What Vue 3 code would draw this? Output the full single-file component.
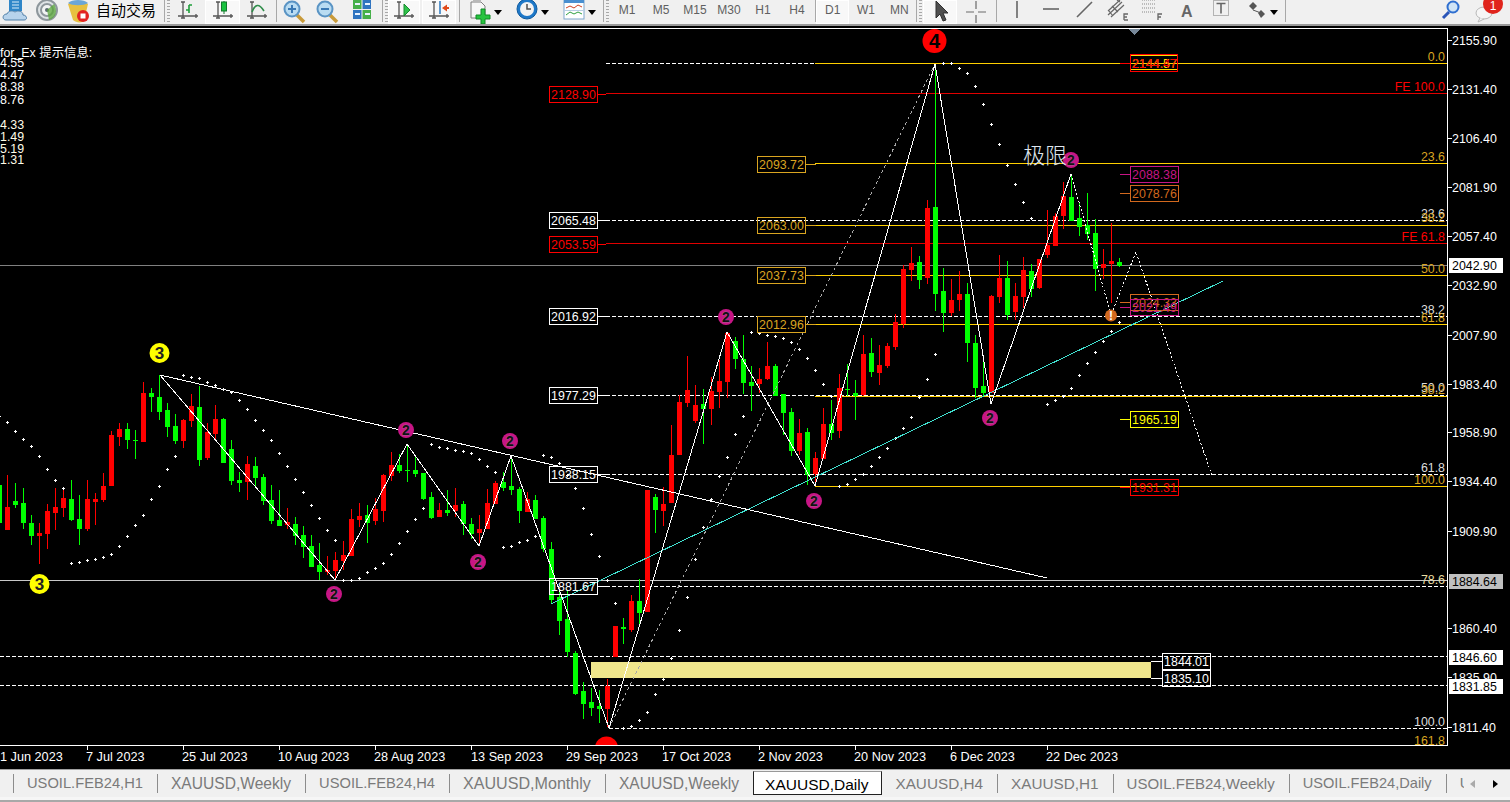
<script setup>
const c = [
[-0.5,470,485,523,540,'g'],[7.5,475,507,530,530,'r'],[15.5,483,501,505,508,'g'],[23.5,488,503,523,529,'g'],[31.5,515,523,536,545,'g'],[39.5,523,533,536,564,'r'],[47.5,504,511,534,549,'r'],[55.5,488,507,513,530,'r'],[63.5,490,498,508,517,'r'],[71.5,480,499,520,521,'g'],[79.5,495,519,529,545,'g'],[87.5,480,499,529,531,'r'],[95.5,493,499,502,525,'r'],[103.5,473,486,500,502,'r'],[111.5,431,435,486,486,'r'],[119.5,423,429,437,446,'r'],[127.5,423,429,440,449,'g'],[135.5,430,440,441,459,'g'],[143.5,382,393,442,442,'r'],[151.5,388,393,397,412,'g'],[159.5,375,397,412,420,'g'],[167.5,403,410,427,437,'g'],[175.5,414,426,441,444,'g'],[183.5,419,420,441,448,'r'],[191.5,394,406,421,427,'r'],[199.5,386,407,460,466,'g'],[207.5,423,432,458,460,'r'],[215.5,405,419,434,440,'r'],[223.5,418,419,463,463,'g'],[231.5,440,449,481,485,'g'],[239.5,472,480,483,492,'g'],[247.5,456,464,482,500,'r'],[255.5,457,466,478,487,'g'],[263.5,474,477,501,505,'g'],[271.5,485,500,521,524,'g'],[279.5,490,520,526,526,'g'],[287.5,508,522,525,529,'r'],[295.5,517,524,536,545,'g'],[303.5,526,535,547,558,'g'],[311.5,535,546,567,567,'g'],[319.5,543,565,572,580,'g'],[327.5,556,570,572,575,'r'],
[335.5,552,560,571,580,'r'],[343.5,541,555,561,570,'r'],[351.5,509,519,556,556,'r'],[359.5,503,516,520,527,'r'],[367.5,505,515,523,543,'g'],[375.5,498,509,521,525,'r'],[383.5,474,475,511,522,'r'],[391.5,452,465,476,481,'r'],[399.5,454,465,471,473,'g'],[407.5,445,470,471,482,'g'],[415.5,457,470,474,477,'g'],[423.5,473,473,499,500,'g'],[431.5,492,497,518,519,'g'],[439.5,503,510,517,517,'r'],[447.5,490,510,513,516,'g'],[455.5,488,505,511,517,'r'],[463.5,501,504,524,535,'g'],[471.5,518,524,534,539,'g'],[479.5,515,529,533,545,'r'],[487.5,489,503,529,529,'r'],[495.5,481,483,504,504,'r'],[503.5,472,482,488,491,'g'],[511.5,456,486,490,495,'g'],[519.5,487,489,511,523,'g'],[527.5,492,499,512,512,'r'],[535.5,495,500,519,519,'g'],[543.5,516,518,549,552,'g'],[551.5,542,549,600,604,'g'],[559.5,590,597,621,635,'g'],[567.5,590,619,652,657,'g'],[575.5,651,653,694,695,'g'],[583.5,682,691,704,719,'g'],[591.5,688,702,708,716,'g'],[599.5,690,706,709,723,'g'],[607.5,679,686,709,727,'r'],[615.5,626,626,657,657,'r'],[623.5,618,627,629,644,'g'],[631.5,595,601,630,632,'r'],[639.5,579,601,613,625,'g'],
[647.5,490,490,612,612,'r'],[655.5,494,497,510,533,'g'],[663.5,487,504,511,526,'r'],[671.5,425,455,503,503,'r'],[679.5,395,402,455,455,'r'],[687.5,356,390,403,407,'r'],[695.5,385,405,421,423,'r'],[703.5,389,404,409,444,'g'],[711.5,377,391,409,425,'r'],[719.5,360,381,392,408,'r'],[727.5,332,333,382,398,'r'],[735.5,337,341,359,369,'g'],[743.5,335,359,383,394,'g'],[751.5,366,382,386,411,'g'],[759.5,368,379,384,393,'r'],[767.5,342,366,379,380,'r'],[775.5,364,366,396,396,'g'],[783.5,394,394,413,435,'g'],[791.5,408,412,451,456,'g'],[799.5,419,433,451,455,'r'],[807.5,428,432,475,485,'g'],[815.5,452,458,474,485,'r'],[823.5,408,424,459,459,'r'],[831.5,400,424,433,440,'g'],[839.5,374,388,431,438,'r'],[847.5,364,389,390,396,'g'],[855.5,380,393,396,420,'g'],[863.5,335,354,395,396,'r'],[871.5,338,353,372,377,'g'],[879.5,345,365,373,385,'r'],[887.5,343,346,366,368,'r'],
[895.5,314,322,347,350,'r'],[903.5,265,269,324,328,'r'],[911.5,247,263,270,281,'r'],[919.5,256,262,280,289,'g'],[927.5,200,208,278,284,'r'],[935.5,64,207,294,311,'g'],[943.5,268,291,313,332,'g'],[951.5,279,300,313,316,'r'],[959.5,271,294,300,311,'r'],[967.5,283,294,343,362,'g'],[975.5,335,343,388,398,'g'],[983.5,359,386,393,397,'g'],[991.5,295,296,393,393,'r'],[999.5,255,278,297,303,'r'],[1007.5,261,278,315,320,'g'],[1015.5,283,296,312,320,'r'],[1023.5,257,270,297,308,'r'],[1031.5,264,271,289,297,'g'],[1039.5,259,259,288,289,'r'],[1047.5,210,245,255,258,'r'],[1055.5,213,216,246,246,'r'],[1063.5,182,196,216,229,'r'],[1071.5,175,197,221,221,'g'],[1079.5,202,218,227,236,'g'],[1087.5,193,225,234,240,'g'],[1095.5,219,233,269,291,'g'],[1103.5,249,264,268,279,'r'],[1111.5,223,261,264,303,'r'],[1119.5,258,262,266,267,'g']
]
const candles = c.map(([x, hi, top, bot, lo, k]) => ({ x, hi, top, bot: Math.max(bot, top + 1), lo, col: k === 'r' ? '#ff0000' : '#00ff00' }))

const segs = [
  [-0.5, [416,422,431,439,446,456,469,480,488]],
  [71.5, [563,562,560,559,557,554,546,536,525,515,499,486,469,456]],
  [183.5, [375,377,378,382,385,389,392,400,409,420,430,440,453,466,479,492,505,518,530,540]],
  [343.5, [580,580,578,572,568,563,554,543,531,519,508]],
  [431.5, [444,447,448,450,451,453,459,466,472]],
  [503.5, [547,546,542,540,536]],
  [543.5, [455,457,463,475,488,508,534,556,580,603]],
  [623.5, [728,726,720,712,694,679,658,630,597,559,527,499,476,457,434,416]],
  [751.5, [332,333,335,336,338,342,349,358,370,384,396]],
  [839.5, [486,484,479,474,466,457,448,438,428,417,397,379,354]],
  [943.5, [63,63,68,73,86,104,124,144,165,184,202,218]],
  [1047.5, [404,400,396,388,375,363,352,341,331,322]]
]
let dotPath = ''
for (const [s, ys] of segs) ys.forEach((y, i) => {
  const x = s + i * 8
  dotPath += `M${x - 1.5} ${y + 0.5}h3M${x} ${y - 1}v3`
})

const WHITE = '#ffffff', RED = '#ff0000', GOLD = '#ffd000'
const hlines = [
  { y: 63.5, x1: 606, col: WHITE, dash: true }, { y: 220.5, x1: 606, col: WHITE, dash: true },
  { y: 316.5, x1: 606, col: WHITE, dash: true }, { y: 395.5, x1: 606, col: WHITE, dash: true },
  { y: 474.5, x1: 606, col: WHITE, dash: true }, { y: 586.5, x1: 606, col: WHITE, dash: true },
  { y: 656.5, x1: 0, col: WHITE, dash: true }, { y: 685.5, x1: 0, col: WHITE, dash: true },
  { y: 728.5, x1: 609, col: WHITE, dash: true },
  { y: 93.5, x1: 606, col: '#e00000' }, { y: 243.5, x1: 606, col: '#e00000' },
  { y: 265.5, x1: 0, col: '#808080' }, { y: 580.5, x1: 0, col: '#c8c8c8' },
  { y: 63.5, x1: 815, col: GOLD }, { y: 163.5, x1: 815, col: GOLD }, { y: 225.5, x1: 815, col: GOLD },
  { y: 275.5, x1: 815, col: GOLD }, { y: 324.5, x1: 815, col: GOLD }, { y: 396.5, x1: 815, col: GOLD },
  { y: 486.5, x1: 815, col: GOLD }
]

const PUR = '#c71585', ORG = '#d2691e', GLD = '#daa520'
const boxes = [
  { x: 549, cy: 94, t: '2128.90', col: RED, stub: 8 }, { x: 549, cy: 220, t: '2065.48', col: WHITE, stub: 8 },
  { x: 549, cy: 244, t: '2053.59', col: RED, stub: 8 }, { x: 549, cy: 316, t: '2016.92', col: WHITE, stub: 8 },
  { x: 549, cy: 395, t: '1977.29', col: WHITE, stub: 8 }, { x: 549, cy: 474, t: '1938.15', col: WHITE, stub: 8 },
  { x: 549, cy: 586, t: '1881.67', col: WHITE, stub: 8 },
  { x: 757, cy: 164, t: '2093.72', col: GLD, stub: 10 }, { x: 757, cy: 225, t: '2063.00', col: GLD, stub: 10 },
  { x: 757, cy: 275, t: '2037.73', col: GLD, stub: 10 }, { x: 757, cy: 324, t: '2012.96', col: GLD, stub: 10 },
  { x: 1130, cy: 174, t: '2088.38', col: PUR, stubL: 10 }, { x: 1130, cy: 193, t: '2078.76', col: ORG, stubL: 10 },
  { x: 1130, cy: 302, t: '2024.33', col: ORG, stubL: 10 }, { x: 1130, cy: 307, t: '2021.49', col: PUR, stubL: 10 },
  { x: 1130, cy: 419, t: '1965.19', col: '#ffff00', stubL: 10 }, { x: 1130, cy: 487, t: '1931.31', col: RED, stubL: 10 },
  { x: 1162, cy: 661, t: '1844.01', col: WHITE, stubL: 11 }, { x: 1162, cy: 678, t: '1835.10', col: WHITE, stubL: 11 }
]

const fib = [
  { y: 61, t: '0.0', col: GLD }, { y: 91, t: 'FE 100.0', col: RED }, { y: 161, t: '23.6', col: GLD },
  { y: 218, t: '23.6', col: '#dddddd' }, { y: 222, t: '38.2', col: GLD }, { y: 241, t: 'FE 61.8', col: RED },
  { y: 273, t: '50.0', col: GLD }, { y: 314, t: '38.2', col: '#dddddd' }, { y: 322, t: '61.8', col: GLD },
  { y: 392, t: '50.0', col: '#dddddd' }, { y: 394, t: '38.2', col: GLD }, { y: 472, t: '61.8', col: '#dddddd' },
  { y: 484, t: '100.0', col: GLD }, { y: 584, t: '78.6', col: '#e8dca0' }, { y: 726, t: '100.0', col: '#dddddd' },
  { y: 745, t: '161.8', col: GLD }
]

const prices = [
  [40, '2155.90'], [89, '2131.40'], [138, '2106.40'], [187, '2081.90'], [236, '2057.40'], [285, '2032.90'],
  [335, '2007.90'], [384, '1983.40'], [432, '1958.90'], [481, '1934.40'], [531, '1909.90'], [628, '1860.40'],
  [677, '1835.90'], [727, '1811.40']
]
const tagged = [
  { y: 265, t: '2042.90', bg: '#ffffff' }, { y: 581, t: '1884.64', bg: '#c0c0c0' },
  { y: 657, t: '1846.60', bg: '#ffffff' }, { y: 686, t: '1831.85', bg: '#ffffff' }
]
const dates = [
  [0, null, '1 Jun 2023'], [86, 87, '7 Jul 2023'], [182, 183, '25 Jul 2023'], [278, 279, '10 Aug 2023'],
  [374, 375, '28 Aug 2023'], [471, 471, '13 Sep 2023'], [566, 567, '29 Sep 2023'], [662, 663, '17 Oct 2023'],
  [758, 759, '2 Nov 2023'], [854, 855, '20 Nov 2023'], [950, 951, '6 Dec 2023'], [1046, 1047, '22 Dec 2023']
]
const leftA = [[67, '4.55'], [79, '4.47'], [91, '8.38'], [104, '8.76']]
const leftB = [[129, '4.33'], [141, '1.49'], [153, '5.19'], [164, '1.31']]
const marks = [
  { x: 726, y: 317 }, { x: 814, y: 501 }, { x: 990, y: 418 }, { x: 1071, y: 160 },
  { x: 406, y: 430 }, { x: 510, y: 441 }, { x: 478, y: 562 }, { x: 334, y: 594 }
]
const tfA = ['M1', 'M5', 'M15', 'M30', 'H1', 'H4']
const tfB = ['D1', 'W1', 'MN']
const tabs = [
  { t: 'USOIL.FEB24,H1', fs: 14.7 }, { t: 'XAUUSD,Weekly', fs: 15.6 }, { t: 'USOIL.FEB24,H4', fs: 14.7 },
  { t: 'XAUUSD,Monthly', fs: 16.1 }, { t: 'XAUUSD,Weekly', fs: 15.6 }, { t: 'XAUUSD,Daily', fs: 15.5 },
  { t: 'XAUUSD,H4', fs: 15.3 }, { t: 'XAUUSD,H1', fs: 15.3 }, { t: 'USOIL.FEB24,Weekly', fs: 15 },
  { t: 'USOIL.FEB24,Daily', fs: 14.6 }, { t: 'USOIL.FEB24,H4', fs: 14.7 }
]
</script>

<template>
  <div class="app">
    <div class="toolbar">
      <span class="b w31"><svg width="30" height="24" viewBox="0 0 30 24"><rect x="8" y="-2" width="13" height="13" fill="#2f86c8"/><path d="M11 2h7M11 5h7M11 8h7" stroke="#d8ecfa"/><path d="M5 20c-4 0-4-6 1-6 1-3 5-4 8-2 3-2 8-1 8 3 4 0 5 5 1 5z" fill="#b7d3ec" stroke="#4f7fa8"/></svg></span>
      <span class="b w31"><svg width="24" height="24" viewBox="0 0 24 24"><circle cx="12" cy="10" r="10" fill="#dfe4e6" stroke="#8e979c" stroke-width="2"/><circle cx="12" cy="10" r="6" fill="#f2f4f4" stroke="#8e979c" stroke-width="2"/><circle cx="12" cy="10" r="2" fill="#5b6b72"/><path d="M19 4c4 6 2 14-5 16l-2-10z" fill="#58a63a" opacity=".75"/></svg></span>
      <span class="b w32"><svg width="26" height="24" viewBox="0 0 26 24"><path d="M3 4c4-3 16-3 20 0l-4 17c-2 2-8 2-11-1z" fill="#e7c040"/><path d="M3 3c4-4 16-4 20 0-4 3-16 3-20 0z" fill="#6ba6d6"/><circle cx="18" cy="16" r="6" fill="#e22222"/><rect x="15.5" y="13.5" width="5" height="5" fill="#fff"/></svg></span>
      <span class="auto">自动交易</span>
      <i class="sep"></i><i class="grip"></i>

      <span class="b w34"><svg width="24" height="24" viewBox="0 0 24 24"><path class="ax" d="M7 2v16M2 16h20M5 2h4M20 14v4M5 18h4"/><path d="M13 13V5M13 10h-3M13 5h3" stroke="#1e9e3a" stroke-width="1.6" fill="none"/></svg></span>
      <span class="b w35 on"><svg width="24" height="24" viewBox="0 0 24 24"><path class="ax" d="M7 2v16M2 16h20M5 2h4M20 14v4M5 18h4"/><path d="M13 0v14" stroke="#137a2c"/><rect x="10.500" y="2" width="5" height="9" fill="#19c23f" stroke="#137a2c"/></svg></span>
      <span class="b w33"><svg width="24" height="24" viewBox="0 0 24 24"><path class="ax" d="M7 2v16M2 16h20M5 2h4M20 14v4M5 18h4"/><path d="M7 12c3-8 7-9 12-1" stroke="#2f8d4a" stroke-width="1.600" fill="none"/></svg></span>
      <i class="sep"></i>
      <span class="b w31"><svg width="26" height="24" viewBox="0 0 26 24"><path d="M15 15l7 7" stroke="#c89a3a" stroke-width="3.500"/><circle cx="10" cy="9" r="7.500" fill="#b9dcf2" stroke="#5a94c4" stroke-width="2"/><path d="M6 9h8M10 5v8" stroke="#3a79b4" stroke-width="2"/></svg></span>
      <span class="b w35"><svg width="26" height="24" viewBox="0 0 26 24"><path d="M15 15l7 7" stroke="#c89a3a" stroke-width="3.500"/><circle cx="10" cy="9" r="7.500" fill="#b9dcf2" stroke="#5a94c4" stroke-width="2"/><path d="M6 9h8" stroke="#3a79b4" stroke-width="2"/></svg></span>
      <span class="b w34"><svg width="24" height="24" viewBox="0 0 24 24"><rect x="3" y="0" width="8.500" height="9" fill="#46b04a"/><rect x="12.500" y="0" width="8.500" height="9" fill="#2f74c0"/><rect x="3" y="10" width="8.500" height="9" fill="#2f74c0"/><rect x="12.500" y="10" width="8.500" height="9" fill="#46b04a"/><path d="M5 4h5M15 4h5M5 14h5M15 14h5" stroke="#e8f2ff" stroke-width="2"/></svg></span>
      <i class="sep"></i><i class="grip narrow"></i>

      <span class="b w32 on"><svg width="24" height="24" viewBox="0 0 24 24"><path class="ax" d="M7 2v16M2 16h20M5 2h4M20 14v4M5 18h4"/><path d="M12 4l6 6-6 6z" fill="#2fc24a" stroke="#188a30"/></svg></span>
      <span class="b w34 gapl on"><svg width="24" height="24" viewBox="0 0 24 24"><path class="ax" d="M7 2v16M2 16h20M5 2h4M20 14v4M5 18h4"/><path d="M13 1v13" stroke="#2a78c0" stroke-width="1.500"/><path d="M15 8l5-3.500V7h2v2h-2v2.500z" fill="#e04a1a"/></svg></span>
      <i class="sep"></i>
      <span class="b w46 ld p6 g0"><svg width="26" height="24" viewBox="0 0 26 24"><path d="M3 2h10l4 4v12H3z" fill="#f7f7f7" stroke="#808080"/><path d="M5 0h8" stroke="#808080"/><path d="M13 9h4v6h5v4h-5v5h-4v-5H8v-4h5z" fill="#27c43f" stroke="#118a26"/></svg><em class="drop"></em></span>
      <span class="b w44 ld p7"><svg width="24" height="24" viewBox="0 0 24 24"><circle cx="12" cy="9" r="10" fill="#1e78c8" stroke="#0e5a9e"/><circle cx="12" cy="9" r="7" fill="#f3f3f3"/><path d="M12 4v5h4" stroke="#505050" fill="none" stroke-width="1.500"/></svg><em class="drop"></em></span>
      <span class="b w48 ld p10"><svg width="24" height="24" viewBox="0 0 24 24"><rect x="2" y="-1" width="20" height="20" fill="#fff" stroke="#7ea6cc"/><rect x="2" y="-1" width="20" height="4" fill="#4a8fd0"/><path d="M4 8l4-2 4 2 4-3 4 2" stroke="#d04020" fill="none"/><path d="M4 15l4-3 4 2 4-2 4 2" stroke="#30a040" fill="none"/><path d="M2 10.500h20" stroke="#b9cfe4"/></svg><em class="drop"></em></span>
      <i class="sep"></i><i class="grip"></i>

      <span v-for="t in tfA" :key="t" class="tf">{{ t }}</span>
      <i class="sep tfsep"></i>
      <span class="tf s on">{{ tfB[0] }}</span>
      <span class="tf s">{{ tfB[1] }}</span>
      <span class="tf s">{{ tfB[2] }}</span>
      <i class="sep tfend"></i><i class="grip"></i>

      <span class="b w34 on"><svg width="24" height="24" viewBox="0 0 24 24"><path d="M8 1v17l4-4 3 7 3-1-3-7h5z" fill="#505050" stroke="#303030"/></svg></span>
      <span class="b w38"><svg width="24" height="24" viewBox="0 0 24 24"><path d="M12 1v8M12 15v8M2 12h8M14 12h8" stroke="#6a6a6a" stroke-width="1.200"/></svg></span>
      <i class="sep drawsep"></i>
      <span class="b w34"><svg width="24" height="24" viewBox="0 0 24 24"><path d="M12 1v17" stroke="#666" stroke-width="1.600"/></svg></span>
      <span class="b w34"><svg width="24" height="24" viewBox="0 0 24 24"><path d="M4 9h16" stroke="#666" stroke-width="1.600"/></svg></span>
      <span class="b w34"><svg width="24" height="24" viewBox="0 0 24 24"><path d="M4 17L19 2" stroke="#666" stroke-width="1.600"/></svg></span>
      <span class="b w34"><svg width="26" height="24" viewBox="0 0 26 24"><path d="M2 11L14 0M2 15L16 2M5 17L18 5M11 0l3 2M6 6l6 6M3 11l4 5" stroke="#666" stroke-width="1.200" fill="none"/><path d="M18 20v-6h4M18 17h3M18 20h4" stroke="#666" stroke-width="1.300" fill="none"/></svg></span>
      <span class="b w34"><svg width="26" height="24" viewBox="0 0 26 24"><path d="M2 0h14M2 4h14M2 8h14M2 12h14" stroke="#888" stroke-dasharray="1 1"/><path d="M18 20v-6h4M18 17h3" stroke="#666" stroke-width="1.300" fill="none"/></svg></span>
      <span class="b w34 glyph">A</span>
      <span class="b w34"><svg width="24" height="24" viewBox="0 0 24 24"><rect x="4.500" y="0.500" width="15" height="15" fill="none" stroke="#777" stroke-dasharray="1 1"/><path d="M7.500 3.500h9M12 3.500v10" stroke="#666" stroke-width="1.600"/></svg></span>
      <span class="b w47 ld p6 g2"><svg width="24" height="24" viewBox="0 0 24 24"><path d="M5 6l4-4 4 4-4 4zM14 13l3-3 4 4-4 4z" fill="#555"/><path d="M9 10l8 3" stroke="#555"/></svg><em class="drop"></em></span>
      <i class="sep endsep"></i>
      <span class="spacer"></span>
      <span class="b w30 searchbtn"><svg width="24" height="24" viewBox="0 0 24 24"><path d="M10 12l-6 6" stroke="#2a55b8" stroke-width="3"/><circle cx="14" cy="7" r="5.500" fill="#cfe4f6" stroke="#2f6fd0" stroke-width="2"/></svg></span>
      <span class="chatico"><svg width="30" height="24" viewBox="0 0 30 24"><ellipse cx="9" cy="13" rx="8" ry="6" fill="#f6f6f6" stroke="#b8b8b8"/><path d="M5 18l-2 4 6-3" fill="#f6f6f6" stroke="#b8b8b8"/><circle cx="18" cy="4" r="10" fill="#e0241c"/><text x="18" y="10" class="badge" text-anchor="middle">1</text></svg></span>
    </div>
    <div class="rule"></div>

    <svg class="chart" width="1510" height="743" viewBox="0 26 1510 743" shape-rendering="crispEdges">
      <rect x="0" y="26" width="1510" height="743" fill="#000"/>
      <line v-for="(l, i) in hlines" :key="'h' + i" :x1="l.x1" x2="1447" :y1="l.y" :y2="l.y" :stroke="l.col" :stroke-dasharray="l.dash ? '4 2' : null"/>

      <g v-for="k in candles" :key="k.x">
        <rect :x="k.x - 0.5" :y="k.hi" width="1" :height="k.lo - k.hi" :fill="k.col"/>
        <rect :x="k.x - 2.5" :y="k.top" width="5" :height="k.bot - k.top" :fill="k.col"/>
      </g>

      <rect x="591" y="662" width="560" height="16" fill="#f0e68c"/>
      <path :d="dotPath" stroke="#fff" fill="none"/>

      <line x1="609" y1="728" x2="935" y2="64" stroke="#a8a8a8" stroke-dasharray="3 3"/>
      <line x1="551" y1="604" x2="1223" y2="281" stroke="#40e0d0"/>
      <line x1="160" y1="375" x2="1047" y2="578" stroke="#fff"/>
      <polyline points="160,375 335,580 407,444 479,546 511,456 609,728 727,332 815,486 935,64 991,404 1071,174" fill="none" stroke="#fff"/>
      <polyline points="1071,174 1111,315 1136,252 1212,476" fill="none" stroke="#fff" stroke-dasharray="2 2"/>

      <g v-for="(b, i) in boxes" :key="'b' + i">
        <line v-if="b.stub" :x1="b.x + 49" :x2="b.x + 49 + b.stub" :y1="b.cy + 0.5" :y2="b.cy + 0.5" :stroke="b.col"/>
        <line v-if="b.stubL" :x1="b.x - b.stubL" :x2="b.x" :y1="b.cy + 0.5" :y2="b.cy + 0.5" :stroke="b.col"/>
        <rect :x="b.x + 0.5" :y="b.cy - 7.5" width="48" height="16" fill="none" :stroke="b.col"/>
        <text :x="b.x + 24.5" :y="b.cy + 5" text-anchor="middle" class="num" :fill="b.col">{{ b.t }}</text>
      </g>

      <line x1="1120" x2="1130" y1="63.500" y2="63.500" stroke="#ff0000"/>
      <path d="M1131 55.500h46M1131 69.500h46" stroke="#ffe000"/>
      <rect x="1130.500" y="54.500" width="47" height="17" fill="none" stroke="#ff0000"/>
      <text x="1154.500" y="68" text-anchor="middle" class="num" fill="#ffe000">2144.57</text>
      <text x="1154.500" y="68" text-anchor="middle" class="num" fill="#ff0000">2144.47</text>

      <text v-for="(f, i) in fib" :key="'f' + i" x="1445" :y="f.y" text-anchor="end" class="num" :fill="f.col">{{ f.t }}</text>

      <g class="smooth">
        <g v-for="(m, i) in marks" :key="'m' + i">
          <circle :cx="m.x" :cy="m.y" r="8" fill="#c71585"/>
          <text :x="m.x" :y="m.y + 5" text-anchor="middle" class="mark">2</text>
        </g>
        <circle cx="159.500" cy="353" r="10" fill="#ffff00"/>
        <text x="159.500" y="359" text-anchor="middle" class="mark3">3</text>
        <circle cx="39.500" cy="584" r="10" fill="#ffff00"/>
        <text x="39.500" y="590" text-anchor="middle" class="mark3">3</text>
        <ellipse cx="934.500" cy="41" rx="12" ry="12" fill="#ff0000"/>
        <text x="934.500" y="48" text-anchor="middle" class="mark4">4</text>
        <circle cx="606.500" cy="748" r="11.500" fill="#ff0000"/>
        <circle cx="1111" cy="315.500" r="6" fill="#d2691e"/>
        <text x="1111" y="320" text-anchor="middle" class="markO">!</text>
        <text x="1023" y="163" class="jixian">极限</text>
      </g>

      <polygon points="1129,29 1140,29 1134.500,35" fill="#778899"/>

      <text v-for="r in leftA" :key="r[1]" x="0" :y="r[0]" class="num" fill="#fff">{{ r[1] }}</text>
      <text v-for="r in leftB" :key="r[1]" x="0" :y="r[0]" class="num" fill="#fffce8">{{ r[1] }}</text>
      <text x="0" y="57" class="num" fill="#fff">for_Ex 提示信息:</text>

      <rect x="0" y="746" width="1510" height="23" fill="#000"/>
      <rect x="0" y="28" width="1447" height="1" fill="#fff"/>
      <rect x="0" y="745" width="1448" height="1" fill="#fff"/>
      <rect x="1447" y="28" width="1" height="718" fill="#fff"/>

      <g v-for="(p, i) in prices" :key="'p' + i">
        <rect x="1448" :y="p[0]" width="4" height="1" fill="#fff"/>
        <text x="1452" :y="p[0] + 5" class="num" fill="#fff">{{ p[1] }}</text>
      </g>
      <g v-for="t in tagged" :key="t.t">
        <rect x="1449" :y="t.y - 7" width="54" height="15" :fill="t.bg"/>
        <text x="1452" :y="t.y + 5" class="num" fill="#000">{{ t.t }}</text>
      </g>

      <g v-for="d in dates" :key="d[2]">
        <rect v-if="d[1]" :x="d[1]" y="746" width="1" height="4" fill="#fff"/>
        <text :x="d[0]" y="761" class="date" fill="#fff">{{ d[2] }}</text>
      </g>
    </svg>

    <div class="tabbar">
      <div class="tabs">
        <span v-for="(t, i) in tabs" :key="i" class="tab" :class="{ active: i === 5, nosep: i === 6 }" :style="{ fontSize: t.fs + 'px' }">{{ t.t }}</span>
      </div>
      <div class="arrows">
        <span class="arrow left"></span>
        <span class="arrow right"></span>
      </div>
    </div>
  </div>
</template>

<style scoped>
.app {
  width: 1510px;
  height: 802px;
  overflow: hidden;
  display: flex;
  flex-direction: column;
  background: #f0f0f0;
  font-family: "Liberation Sans", "Noto Sans CJK SC", sans-serif;
}
.toolbar {
  height: 24px;
  flex: none;
  display: flex;
  align-items: stretch;
  background: #f0f0f0;
  overflow: hidden;
}
.rule { height: 2px; flex: none; background: #9a9a9a; }
.b {
  flex: none;
  display: flex;
  align-items: center;
  justify-content: center;
  box-sizing: border-box;
}
.b svg, .chatico svg { display: block; flex: none; }
.b.ld { justify-content: flex-start; gap: 4px; }
.p6 { padding-left: 6px; }
.p7 { padding-left: 7px; }
.p10 { padding-left: 10px; }
.b.g0 { gap: 0; }
.b.p7, .b.p10, .b.g2 { gap: 2px; }
.w30 { width: 30px; }
.w31 { width: 31px; }
.w32 { width: 32px; }
.w33 { width: 33px; }
.w34 { width: 34px; }
.w35 { width: 35px; }
.w38 { width: 38px; }
.w44 { width: 44px; }
.w46 { width: 46px; }
.w47 { width: 47px; }
.w48 { width: 48px; }
.gapl { margin-left: 2px; }
.on { background: #f8f8f8; outline: 1px solid #fff; outline-offset: -1px; }
.auto {
  flex: none;
  width: 67px;
  padding-left: 2px;
  box-sizing: border-box;
  font-size: 15px;
  line-height: 22px;
  color: #000;
  white-space: nowrap;
}
.sep {
  flex: none;
  width: 1px;
  margin: 0 2.5px;
  background: #a8a8a8;
  height: 22px;
}
.tfsep { margin: 0 0 0 1px; }
.tfend { margin: 0 2px 0 0; }
.drawsep { margin: 0 3px 0 1px; }
.endsep { margin: 0; }
.grip {
  flex: none;
  width: 3px;
  margin: 0 1px 0 0;
  height: 22px;
  background-image: repeating-linear-gradient(to bottom, #a8a8a8 0 1px, transparent 1px 3px);
}
.grip.narrow { margin-right: 0; }
.drop {
  width: 0;
  height: 0;
  border-left: 4px solid transparent;
  border-right: 4px solid transparent;
  border-top: 5px solid #000;
}
.tf {
  flex: none;
  width: 34px;
  text-align: center;
  font-size: 12px;
  line-height: 20px;
  color: #606060;
  box-sizing: border-box;
}
.tf.s { width: 33.3px; }
.glyph { font-size: 16px; font-weight: 700; color: #666; }
.spacer { flex: 1; }
.searchbtn { margin-right: 9px; }
.chatico { flex: none; width: 30px; margin-right: 5px; }
.badge { fill: #fff; font-size: 12px; font-family: "Liberation Sans", sans-serif; }
.ax { stroke: #555; stroke-width: 1.3; fill: none; }

.chart { display: block; flex: none; }
.smooth { shape-rendering: geometricPrecision; }
.num {
  font-family: "Liberation Sans", "Noto Sans CJK SC", sans-serif;
  font-size: 12.4px;
}
.date {
  font-family: "Liberation Sans", sans-serif;
  font-size: 12.7px;
}
.mark {
  font: 700 14px "Liberation Sans", sans-serif;
  fill: #111;
  stroke: #a8608e;
  stroke-width: .8px;
  paint-order: stroke;
}
.mark3 { font: 700 17px "Liberation Sans", sans-serif; fill: #222; }
.mark4 { font: 700 20px "Liberation Sans", sans-serif; fill: #000; }
.markO { font: 700 12px "Liberation Sans", sans-serif; fill: #fff; }
.jixian { font-family: "Noto Sans CJK SC", sans-serif; font-size: 22px; font-weight: 300; fill: #dfe6ee; }

.tabbar {
  flex: 1;
  display: flex;
  box-sizing: border-box;
  border-top: 1px solid #a0a0a0;
  border-bottom: 2px solid #a8a8a8;
  background: #f6f6f6;
  min-height: 0;
}
.tabs {
  flex: 1;
  min-width: 0;
  height: 27px;
  display: flex;
  overflow: hidden;
  padding-left: 13px;
  background: #f0f0f0;
}
.tab {
  flex: none;
  padding: 0 14px 0 13px;
  height: 19px;
  margin-top: 4px;
  line-height: 19px;
  border-left: 1px solid #8c8c8c;
  color: #7a7a7a;
  white-space: nowrap;
}
.tab.active {
  margin-top: 1px;
  line-height: 26px;
  padding: 0 13px 0 11px;
  background: #fff;
  color: #000;
  border: 1px solid #222;
  border-top-color: #999;
  box-sizing: content-box;
  height: 22px;
}
.tab.nosep { border-left: none; }
.arrows {
  flex: none;
  width: 46px;
  height: 27px;
  background: #f0f0f0;
  display: flex;
  align-items: center;
  gap: 18px;
  padding-left: 6px;
  box-sizing: border-box;
}
.arrow { width: 0; height: 0; border-top: 4px solid transparent; border-bottom: 4px solid transparent; }
.arrow.left { border-right: 5px solid #aaa; }
.arrow.right { border-left: 5px solid #000; }
</style>
